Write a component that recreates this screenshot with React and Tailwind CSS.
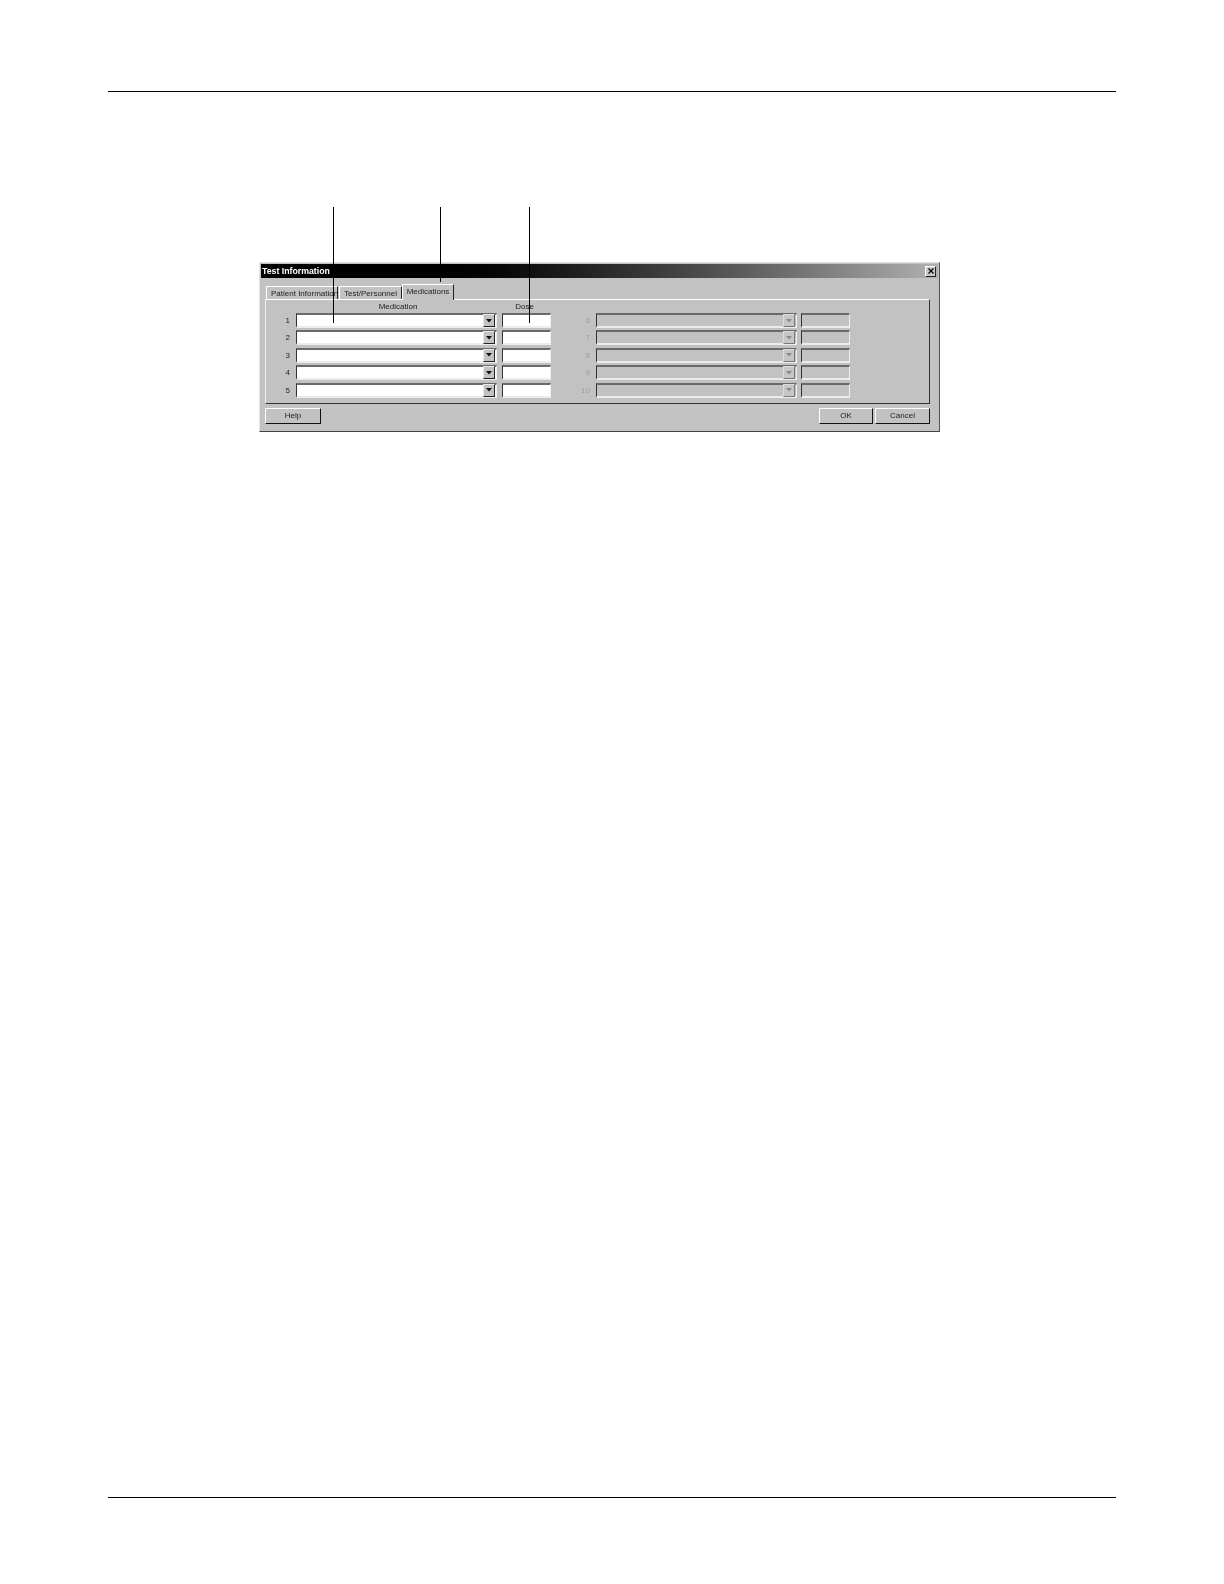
import React from "react";

const font = { fontFamily: '"Liberation Sans", Arial, sans-serif' };

function Arrow({ disabled }) {
  return (
    <span
      className={
        disabled
          ? "flex h-[13px] w-[12px] items-center justify-center border-t border-l border-t-[#dcdcdc] border-l-[#dcdcdc] border-r border-b border-r-[#777] border-b-[#777] bg-[#c6c6c6]"
          : "flex h-[13px] w-[12px] items-center justify-center border-t border-l border-t-[#e8e8e8] border-l-[#e8e8e8] border-r border-b border-r-[#222] border-b-[#222] bg-[#c2c2c2]"
      }
    >
      <svg width="6" height="4" viewBox="0 0 6 4">
        <path d="M0 0H6L3 3.5Z" fill={disabled ? "#8a8a8a" : "#111"} />
      </svg>
    </span>
  );
}

function Combo({ disabled }) {
  return (
    <div
      className={
        "flex h-[15px] w-[201px] items-center justify-end border-t-2 border-l border-t-[#6a6a6a] border-l-[#333] border-r border-b-2 border-r-[#eee] border-b-[#ececec] pr-px " +
        (disabled ? "bg-[#c2c2c2]" : "bg-white")
      }
    >
      <Arrow disabled={disabled} />
    </div>
  );
}

function Dose({ disabled }) {
  return (
    <div
      className={
        "h-[15px] w-[49px] border-t-2 border-l border-t-[#6a6a6a] border-l-[#333] border-r border-b-2 border-r-[#eee] border-b-[#ececec] " +
        (disabled ? "bg-[#c2c2c2]" : "bg-white")
      }
    />
  );
}

function Row({ n, m }) {
  return (
    <div className="flex h-[15px] items-center">
      <span className="w-[30px] pr-[6px] text-right text-[#222]">{n}</span>
      <Combo />
      <span className="w-[5px]" />
      <Dose />
      <span className="w-[45px] pr-[6px] text-right text-[#9c9c9c]">{m}</span>
      <Combo disabled />
      <span className="w-[4px]" />
      <Dose disabled />
    </div>
  );
}

function Btn({ w, children }) {
  return (
    <button className={"h-[16px] border-t border-l border-t-white border-l-white border-r border-b border-r-[#111] border-b-[#111] bg-[#c2c2c2] text-center leading-[14px] text-[#222] " + w}>
      {children}
    </button>
  );
}

export default function App() {
  return (
    <div className="flex h-[1584px] w-[1224px] flex-col bg-white" style={font}>
      <div className="ml-[108px] mt-[91px] h-px w-[1008px] bg-black" />

      <div className="relative ml-[259px] mt-[170px] w-[681px]">
        <div className="absolute left-[74px] top-[-55px] z-20 h-[116px] w-px bg-black" />
        <div className="absolute left-[181px] top-[-55px] z-20 h-[75px] w-px bg-black" />
        <div className="absolute left-[270px] top-[-55px] z-20 h-[116px] w-px bg-black" />

        <div className="h-[170px] border-t border-l border-t-[#dedede] border-l-[#e6e6e6] border-r border-b border-r-[#555] border-b-[#444] bg-[#c2c2c2] text-[8px] leading-[11px] blur-[0.3px]">
          <div className="mx-[1px] mt-px flex h-[14px] items-center justify-between bg-linear-to-r from-black from-[22%] to-[#b0b0b0] pr-[2px]">
            <span className="pl-[1px] text-[8.75px] font-bold text-white">Test Information</span>
            <span className="flex h-[11px] w-[11px] items-center justify-center border-t border-l border-t-white border-l-white border-r border-b border-r-[#222] border-b-[#222] bg-[#c8c8c8]">
              <svg width="6" height="6" viewBox="0 0 6 6">
                <path d="M0.5 0.5L5.5 5.5M5.5 0.5L0.5 5.5" stroke="#000" strokeWidth="1.2" />
              </svg>
            </span>
          </div>

          <div className="pl-[5px] pr-[9px]">
            <div className="flex h-[21px] items-end pl-px">
              <div className="mr-px flex h-[13px] w-[72px] items-center overflow-hidden whitespace-nowrap rounded-t-[1px] border-t border-l border-t-white border-l-white border-r border-r-[#222] pl-[4px] text-[#222]">
                Patient Information
              </div>
              <div className="flex h-[13px] w-[63px] items-center justify-center whitespace-nowrap rounded-t-[1px] border-t border-l border-t-white border-l-white border-r border-r-[#222] text-[#222]">
                Test/Personnel
              </div>
              <div className="relative z-10 -mb-px flex h-[16px] w-[52px] items-center justify-center whitespace-nowrap rounded-t-[1px] border-t border-l border-t-white border-l-white border-r border-r-[#222] bg-[#c2c2c2] pb-[2px] text-[#222]">
                Medications
              </div>
            </div>

            <div className="h-[105px] border-t border-l border-t-white border-l-[#eee] border-r border-b border-r-[#333] border-b-[#333]">
              <div className="flex h-[13px] items-center text-[#222]">
                <span className="w-[30px]" />
                <span className="w-[201px] pl-[3px] text-center">Medication</span>
                <span className="w-[5px]" />
                <span className="w-[49px] pr-[4px] text-center">Dose</span>
              </div>
              <div className="flex flex-col gap-[2.4px]">
                <Row n="1" m="6" />
                <Row n="2" m="7" />
                <Row n="3" m="8" />
                <Row n="4" m="9" />
                <Row n="5" m="10" />
              </div>
            </div>

            <div className="mt-[4px] flex items-center justify-between">
              <Btn w="w-[56px]">Help</Btn>
              <div className="flex gap-[2px]">
                <Btn w="w-[54px]">OK</Btn>
                <Btn w="w-[55px]">Cancel</Btn>
              </div>
            </div>
          </div>
        </div>
      </div>

      <div className="mb-[86px] ml-[108px] mt-auto h-px w-[1008px] bg-black" />
    </div>
  );
}
